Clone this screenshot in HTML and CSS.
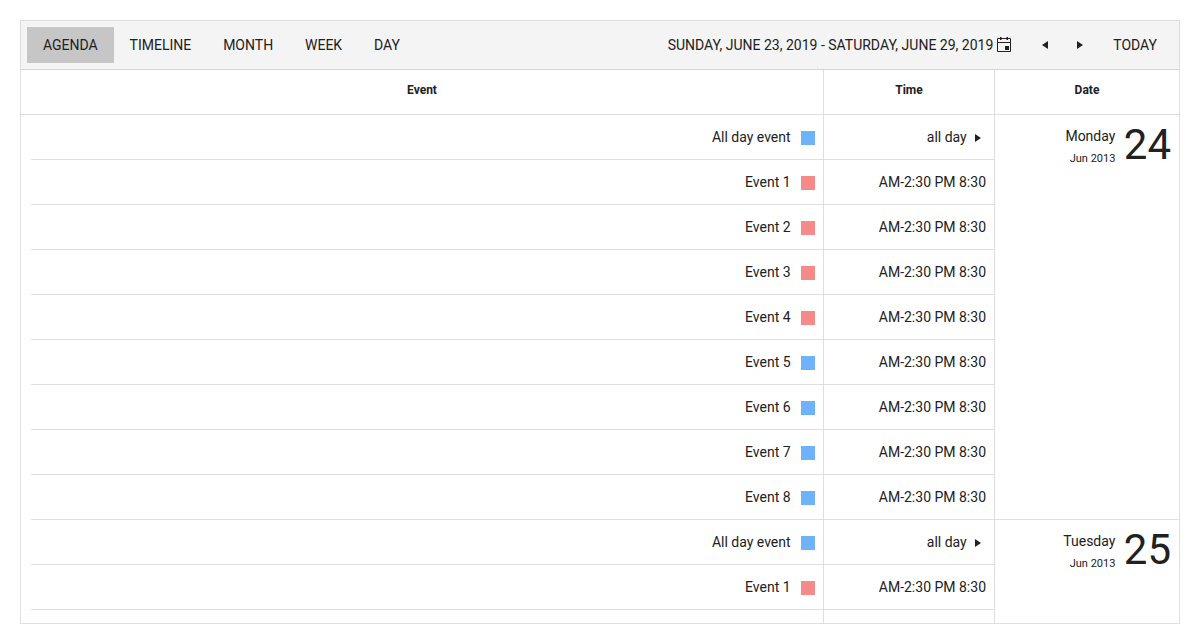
FILE: index.html
```html
<!DOCTYPE html>
<html lang="en">
<head>
<meta charset="utf-8">
<title>Scheduler</title>
<link rel="stylesheet" href="styles.css">
<script src="agenda.js" defer></script>
</head>
<body>
<main class="scheduler">
  <header class="toolbar">
    <nav class="views">
      <button class="btn active">AGENDA</button><button class="btn">TIMELINE</button><button class="btn">MONTH</button><button class="btn">WEEK</button><button class="btn">DAY</button>
    </nav>
    <div class="navigation">
      <span class="range">SUNDAY, JUNE 23, 2019 - SATURDAY, JUNE 29, 2019</span>
      <svg class="calendar" viewBox="0 0 16 16"><path d="M1.5 1.5h13v13h-13zM1 5.5h14" fill="none" stroke="currentColor"/><path d="M4 0h1.5v3H4zM10.5 0H12v3h-1.5zM9 9h4v4H9z"/></svg>
      <button class="arrow"><svg viewBox="0 0 16 16"><path d="M11 4v8L5 8z"/></svg></button>
      <button class="arrow"><svg viewBox="0 0 16 16"><path d="M5 4v8l6-4z"/></svg></button>
      <button class="today">TODAY</button>
    </div>
  </header>
  <div class="headings"><div>Event</div><div>Time</div><div>Date</div></div>
  <div class="agenda"></div>
</main>
</body>
</html>
```
FILE: styles.css
```css
* { box-sizing: border-box; }
body { margin: 0; padding: 20px; height: 644px; overflow: hidden; background: #fff; color: #212121; font: 14px/20px Roboto, sans-serif; }
button { font: inherit; color: inherit; border: 0; background: none; padding: 0; }
svg { fill: currentColor; display: block; }
.scheduler { height: 604px; border: 1px solid #dedede; overflow: hidden; }
.toolbar { height: 49px; display: flex; justify-content: space-between; align-items: center; padding: 0 6px; background: #f4f4f4; border-bottom: 1px solid #d6d6d6; }
.views, .navigation { display: flex; align-items: center; }
.btn { height: 36px; padding: 0 15.9px 0 16px; }
.active { background: #c6c6c6; }
.calendar { width: 16px; height: 16px; margin: 0 15.3px 0 2.7px; }
.arrow { width: 35px; display: flex; justify-content: center; }
.arrow svg { width: 16px; height: 16px; }
.today { padding: 0 16px; }
.headings { height: 45px; display: grid; grid-template-columns: 802px 171px 185px; border-bottom: 1px solid #dedede; font-size: 12px; font-weight: 700; text-align: center; line-height: 40px; }
.headings div + div { border-left: 1px solid #dedede; }
.day { display: grid; grid-template-columns: 973px 185px; }
.row { height: 45px; display: grid; grid-template-columns: 792px 171px; margin-left: 10px; border-bottom: 1px solid #dedede; }
.event, .time { display: flex; align-items: center; justify-content: flex-end; padding-right: 8px; }
.time { border-left: 1px solid #dedede; }
.marker { width: 14px; height: 14px; margin: 2px 0 0 10.4px; background: #6eb3fa; }
.red { background: #f58a8a; }
.more { width: 16px; height: 16px; margin: 2px 0 0 3.3px; }
.date { display: flex; justify-content: flex-end; gap: 8.4px; padding: 8px 8px 0; border-left: 1px solid #dedede; border-bottom: 1px solid #dedede; }
.weekday { display: flex; flex-direction: column; text-align: right; padding-top: 3px; }
.weekday small { font-size: 11px; line-height: 16px; margin-top: 5px; }
.number { font-size: 42px; line-height: 44px; }
```
FILE: agenda.js
```js
const days = [["Monday", 24, 8], ["Tuesday", 25, 2]];
const agenda = document.querySelector(".agenda");
agenda.innerHTML = days.map(([name, number, count]) => {
  let rows = "";
  for (let i = 0; i <= count; i++) {
    const time = i ? "AM-2:30 PM 8:30" : 'all day <svg class="more" viewBox="0 0 16 16"><path d="M5 4v8l6-4z"/></svg>';
    const title = i ? "Event " + i : "All day event";
    const red = number === 25 && i === 2 ? null : i > 0 && i < 5;
    rows += red === null
      ? '<div class="row"><div class="event"></div><div class="time"></div></div>'
      : `<div class="row"><div class="event">${title}<i class="marker ${red ? "red" : ""}"></i></div><div class="time">${time}</div></div>`;
  }
  return `<section class="day"><div>${rows}</div><div class="date"><div class="weekday"><span>${name}</span><small>Jun 2013</small></div><div class="number">${number}</div></div></section>`;
}).join("");
```
